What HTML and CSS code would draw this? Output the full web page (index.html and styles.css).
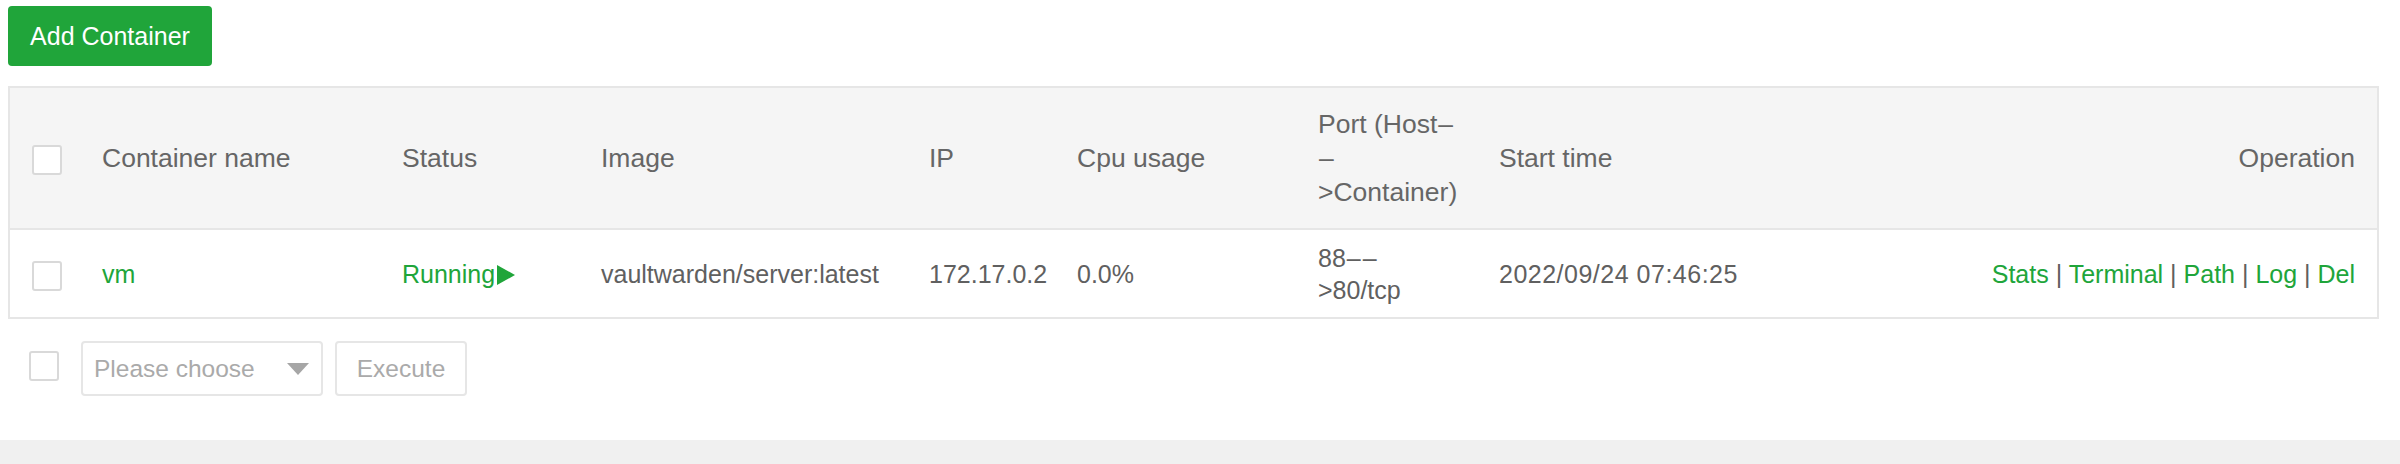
FILE: index.html
```html
<!DOCTYPE html>
<html lang="en">
<head>
<meta charset="utf-8">
<title>Containers</title>
<link rel="stylesheet" href="styles.css">
</head>
<body>
<div class="page">
  <div class="toolbar">
    <button class="btn-primary" type="button">Add Container</button>
  </div>

  <table class="ctable">
    <colgroup>
      <col class="c-check">
      <col class="c-name">
      <col class="c-status">
      <col class="c-image">
      <col class="c-ip">
      <col class="c-cpu">
      <col class="c-port">
      <col class="c-start">
      <col class="c-op">
    </colgroup>
    <thead>
      <tr>
        <th><span class="checkbox"></span></th>
        <th>Container name</th>
        <th>Status</th>
        <th>Image</th>
        <th>IP</th>
        <th>Cpu usage</th>
        <th class="nowrap">Port (Host<span class="dash">–</span><br><span class="dash">–</span><br>&gt;Container)</th>
        <th>Start time</th>
        <th class="right">Operation</th>
      </tr>
    </thead>
    <tbody>
      <tr>
        <td><span class="checkbox"></span></td>
        <td><a class="link">vm</a></td>
        <td><span class="running">Running<span class="play"></span></span></td>
        <td>vaultwarden/server:latest</td>
        <td>172.17.0.2</td>
        <td>0.0%</td>
        <td class="nowrap">88<span class="dash">––</span><br>&gt;80/tcp</td>
        <td class="date">2022/09/24 07:46:25</td>
        <td class="right ops"><a class="link">Stats</a> | <a class="link">Terminal</a> | <a class="link">Path</a> | <a class="link">Log</a> | <a class="link">Del</a></td>
      </tr>
    </tbody>
  </table>

  <div class="batch">
    <span class="checkbox batch-check"></span>
    <div class="select">
      <span class="placeholder">Please choose</span>
      <span class="caret"></span>
    </div>
    <button class="btn-plain" type="button">Execute</button>
  </div>
</div>
</body>
</html>
```

FILE: styles.css
```css
html, body {
  margin: 0;
  padding: 0;
}

body {
  background: #f0f0f0;
  font-family: "Liberation Sans", Arial, sans-serif;
  color: #666;
}

.page {
  background: #fff;
  height: 440px;
  box-sizing: border-box;
  padding: 6px 21px 0 8px;
}

.toolbar {
  display: flex;
}

.btn-primary {
  height: 60px;
  padding: 0 22px;
  border: 0;
  border-radius: 4px;
  background: #20a53a;
  color: #fff;
  font-family: "Liberation Sans", Arial, sans-serif;
  font-size: 25px;
  line-height: 60px;
  width: 204px;
}

.ctable {
  margin-top: 20px;
  width: 100%;
  table-layout: fixed;
  border-collapse: collapse;
  border: 2px solid #e6e6e6;
}

.c-check { width: 71px; }
.c-name { width: 300px; }
.c-status { width: 199px; }
.c-image { width: 328px; }
.c-ip { width: 148px; }
.c-cpu { width: 241px; }
.c-port { width: 181px; }
.c-start { width: 400px; }

.ctable th {
  background: #f5f5f5;
  font-weight: normal;
  font-size: 26.5px;
  line-height: 34px;
  color: #666;
  text-align: left;
  padding: 19px 22px 19px;
  vertical-align: middle;
  border-bottom: 2px solid #e6e6e6;
}

.ctable td {
  font-size: 25px;
  line-height: 32px;
  color: #606060;
  padding: 12px 22px 11px;
  vertical-align: middle;
  text-align: left;
}

.ctable .date {
  letter-spacing: 0.5px;
}

.ctable .right {
  text-align: right;
}

.nowrap {
  white-space: nowrap;
}

.dash {
  letter-spacing: 2px;
  margin-left: 1px;
}

.checkbox {
  display: inline-block;
  width: 30px;
  height: 30px;
  box-sizing: border-box;
  border: 2px solid #d9d9d9;
  border-radius: 3px;
  background: #fff;
  vertical-align: middle;
}

.link {
  color: #20a53a;
  text-decoration: none;
}

.ops {
  color: #666;
}

.running {
  color: #20a53a;
}

.play {
  display: inline-block;
  width: 0;
  height: 0;
  border-left: 18px solid #20a53a;
  border-top: 10.5px solid transparent;
  border-bottom: 10.5px solid transparent;
  vertical-align: -2px;
  margin-left: 2px;
}

.batch {
  display: flex;
  align-items: center;
  margin-top: 22px;
  padding-left: 21px;
}

.batch-check {
  margin-right: 22px;
  margin-bottom: 5px;
}

.select {
  width: 242px;
  height: 55px;
  box-sizing: border-box;
  border: 2px solid #e6e6e6;
  border-radius: 4px;
  display: flex;
  align-items: center;
  justify-content: space-between;
  padding: 0 12px 0 11px;
  margin-right: 12px;
}

.placeholder {
  font-size: 24.5px;
  color: #aaa;
}

.caret {
  width: 0;
  height: 0;
  border-top: 12px solid #a6a6a6;
  border-left: 11px solid transparent;
  border-right: 11px solid transparent;
}

.btn-plain {
  width: 132px;
  height: 55px;
  box-sizing: border-box;
  border: 2px solid #e6e6e6;
  border-radius: 4px;
  background: #fff;
  color: #aaa;
  font-family: "Liberation Sans", Arial, sans-serif;
  font-size: 24.5px;
  padding: 0;
}
```
